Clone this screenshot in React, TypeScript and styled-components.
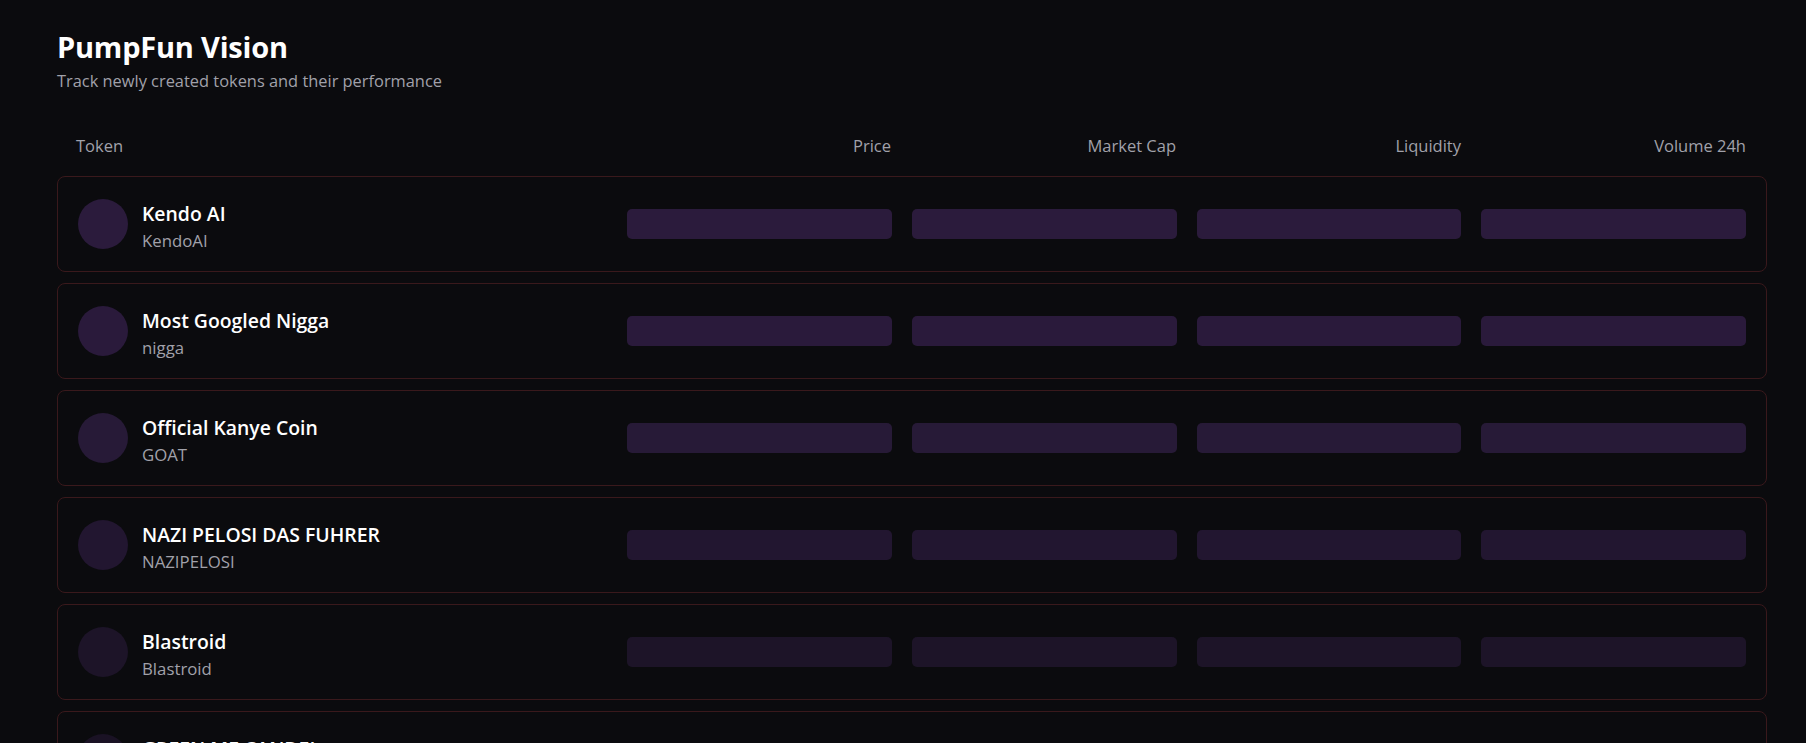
import React from "react";
import styled, { createGlobalStyle } from "styled-components";

const GlobalStyle = createGlobalStyle`
  html, body {
    margin: 0;
    padding: 0;
    background: #0b0b0e;
    overflow: hidden;
  }
  body {
    font-family: "Open Sans", "Noto Sans", sans-serif;
    color: #f4f4f5;
  }
`;

const Page = styled.div`
  padding: 28px 39px 0 57px;
  height: 743px;
  box-sizing: border-box;
  overflow: hidden;
`;

const Header = styled.header`
  display: flex;
  flex-direction: column;
  gap: 3px;
  margin-bottom: 41px;
`;

const Title = styled.h1`
  margin: 0;
  font-size: 29px;
  line-height: 38px;
  font-weight: 700;
  color: #ffffff;
  letter-spacing: -0.2px;
`;

const Subtitle = styled.p`
  margin: 0;
  font-size: 16.4px;
  line-height: 23px;
  color: #a1a1aa;
`;

const Grid = styled.div`
  display: grid;
  grid-template-columns: 2fr 1fr 1fr 1fr 1fr;
  column-gap: 20px;
  align-items: center;
`;

const HeaderRow = styled(Grid)`
  padding: 0 21px 0 19px;
  height: 24px;
  margin-bottom: 19px;
`;

const HeadCell = styled.div<{ $right?: boolean }>`
  font-size: 16.5px;
  color: #a1a1aa;
  text-align: ${(p) => (p.$right ? "right" : "left")};
`;

const List = styled.div`
  display: flex;
  flex-direction: column;
  gap: 11px;
`;

const Card = styled(Grid)`
  border: 1px solid #3a191c;
  border-radius: 8px;
  padding: 0 20px;
  height: 96px;
  box-sizing: border-box;
  background: #0b0b0e;
  flex-shrink: 0;
`;

const TokenCell = styled.div`
  display: flex;
  align-items: center;
  gap: 14px;
`;

const Avatar = styled.div<{ $c: string }>`
  width: 50px;
  height: 50px;
  border-radius: 50%;
  background: ${(p) => p.$c};
  flex-shrink: 0;
`;

const TokenText = styled.div`
  display: flex;
  flex-direction: column;
  gap: 2px;
  margin-top: 5px;
`;

const Name = styled.div`
  font-size: 19.4px;
  line-height: 27px;
  font-weight: 600;
  color: #ffffff;
  white-space: nowrap;
`;

const Symbol = styled.div`
  font-size: 16.8px;
  line-height: 24px;
  color: #a1a1aa;
`;

const Skeleton = styled.div<{ $c: string }>`
  height: 30px;
  border-radius: 5px;
  background: ${(p) => p.$c};
`;

const tokens = [
  { name: "Kendo AI", symbol: "KendoAI", c: "#2b1b3c" },
  { name: "Most Googled Nigga", symbol: "nigga", c: "#2a1a3b" },
  { name: "Official Kanye Coin", symbol: "GOAT", c: "#271a37" },
  { name: "NAZI PELOSI DAS FUHRER", symbol: "NAZIPELOSI", c: "#221630" },
  { name: "Blastroid", symbol: "Blastroid", c: "#1d1428" },
  { name: "GREEN ME CANDEL", symbol: "GREENME", c: "#1a1224" },
];

export default function App() {
  return (
    <>
      <GlobalStyle />
      <Page>
        <Header>
          <Title>PumpFun Vision</Title>
          <Subtitle>Track newly created tokens and their performance</Subtitle>
        </Header>
        <HeaderRow>
          <HeadCell>Token</HeadCell>
          <HeadCell $right>Price</HeadCell>
          <HeadCell $right>Market Cap</HeadCell>
          <HeadCell $right>Liquidity</HeadCell>
          <HeadCell $right>Volume 24h</HeadCell>
        </HeaderRow>
        <List>
          {tokens.map((t) => (
            <Card key={t.name}>
              <TokenCell>
                <Avatar $c={t.c} />
                <TokenText>
                  <Name>{t.name}</Name>
                  <Symbol>{t.symbol}</Symbol>
                </TokenText>
              </TokenCell>
              <Skeleton $c={t.c} />
              <Skeleton $c={t.c} />
              <Skeleton $c={t.c} />
              <Skeleton $c={t.c} />
            </Card>
          ))}
        </List>
      </Page>
    </>
  );
}
